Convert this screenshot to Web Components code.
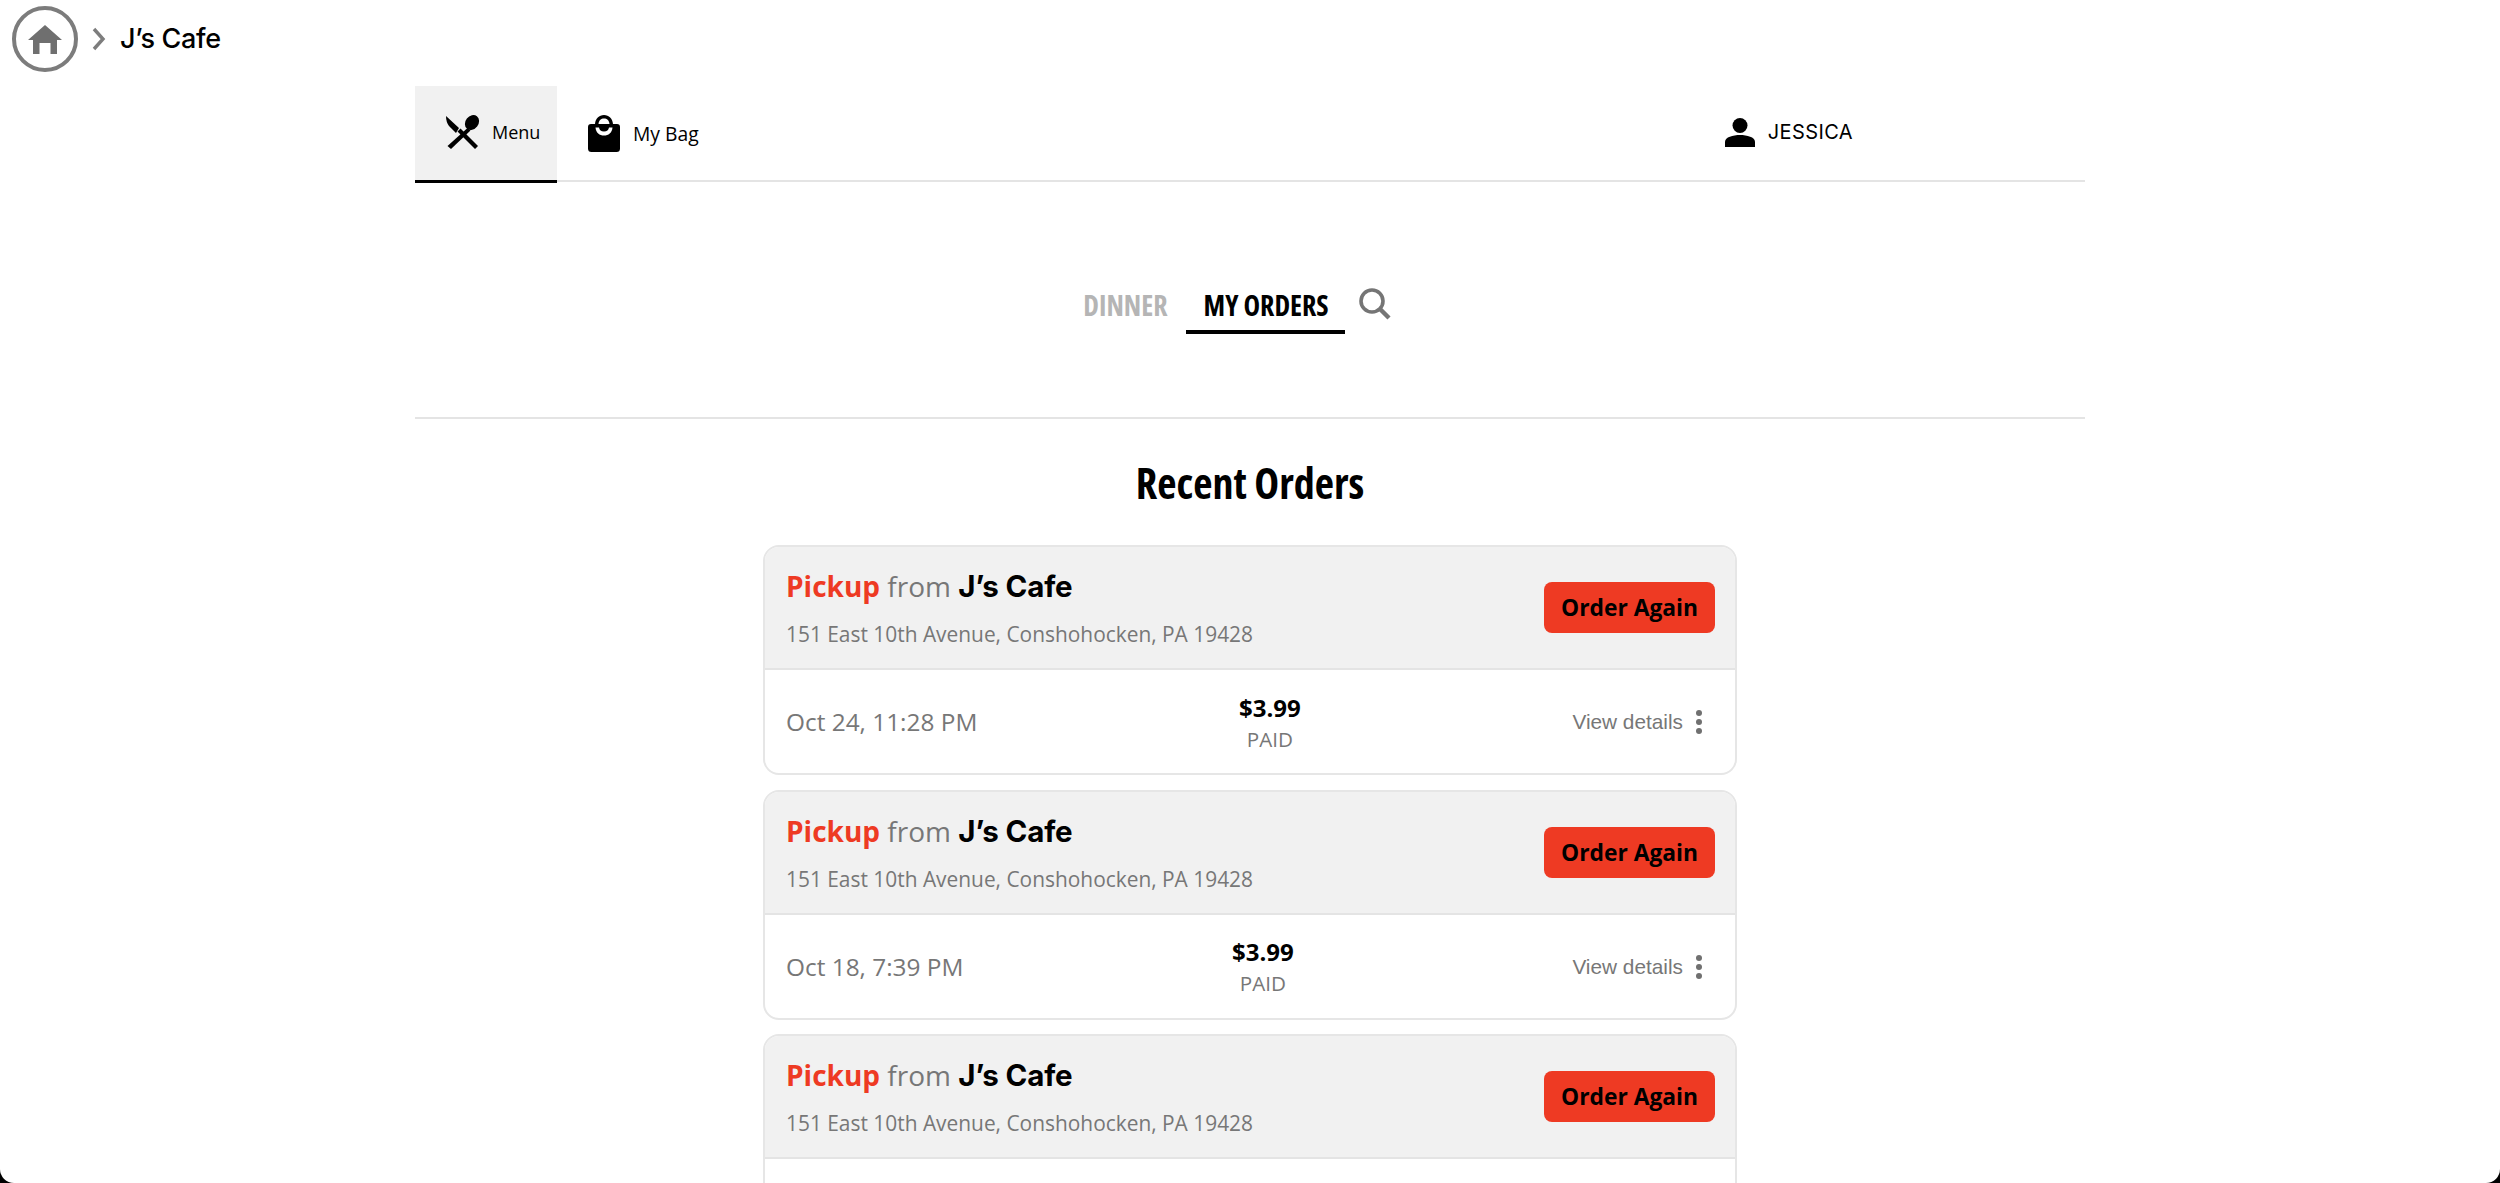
<!DOCTYPE html>
<html>
<head>
<meta charset="utf-8">
<title>J's Cafe</title>
<style>
  html, body { margin: 0; height: 100%; background: #000; overflow: hidden; }
  body { font-family: "Open Sans", sans-serif; }
</style>
</head>
<body>
<cafe-app>
  <cafe-crumbs slot="crumbs">J’s Cafe</cafe-crumbs>
  <cafe-nav slot="nav"></cafe-nav>
  <cafe-tabs slot="tabs"></cafe-tabs>
  <order-card date="Oct 24, 11:28 PM"></order-card>
  <order-card date="Oct 18, 7:39 PM"></order-card>
  <order-card></order-card>
</cafe-app>

<script>
const cafe_app = document.createElement('template');
cafe_app.innerHTML = `
  <style>
    :host { display: block; height: 1183px; background: #fff; border-radius: 0 0 14px 14px; overflow: hidden; }
    .wrap { width: 1670px; margin: 0 auto; }
    h1 {
      font: 700 42px/60px "Open Sans", sans-serif; color: #000; margin: 0; text-align: center;
      font-stretch: 75%; padding-top: 34px; height: 126px; box-sizing: border-box;
    }
    .list { width: 974px; margin: 0 auto; display: flex; flex-direction: column; gap: 14.5px; }
  </style>
  <slot name="crumbs"></slot>
  <div class="wrap">
    <slot name="nav"></slot>
    <slot name="tabs"></slot>
    <h1>Recent Orders</h1>
    <div class="list"><slot></slot></div>
  </div>
`;
class CafeApp extends HTMLElement {
  constructor() {
    super();
    this.attachShadow({ mode: 'open' });
    this.shadowRoot.appendChild(cafe_app.content.cloneNode(true));
  }
}
customElements.define('cafe-app', CafeApp);

const cafe_crumbs = document.createElement('template');
cafe_crumbs.innerHTML = `
  <style>
    :host { display: flex; height: 86px; padding: 6px 0 0 12px; box-sizing: border-box; align-items: flex-start; }
    .home { width: 66px; height: 66px; box-sizing: border-box; border: 4px solid #7c7c7c; border-radius: 50%; display: flex; align-items: center; justify-content: center; }
    .sep { margin: 20px 0 0 14px; }
    .name { margin: 8px 0 0 14px; font: 500 27px/50px Inter, sans-serif; color: #000; letter-spacing: -0.3px; }
  </style>
  <div class="home">
    <svg width="36" height="31" viewBox="0 0 36 31"><path fill="#6f6f6f" d="M18 1 L35 16 H30 V30 H23.5 V19 H12.5 V30 H6 V16 H1 Z"/></svg>
  </div>
  <svg class="sep" width="14" height="26" viewBox="0 0 14 26"><path fill="none" stroke="#7d7d7d" stroke-width="3.4" d="M2 3 L11 13 L2 23"/></svg>
  <div class="name"><slot></slot></div>
`;
class CafeCrumbs extends HTMLElement {
  constructor() {
    super();
    this.attachShadow({ mode: 'open' });
    this.shadowRoot.appendChild(cafe_crumbs.content.cloneNode(true));
  }
}
customElements.define('cafe-crumbs', CafeCrumbs);

const cafe_nav = document.createElement('template');
cafe_nav.innerHTML = `
  <style>
    :host { display: flex; height: 94px; border-bottom: 2px solid #e4e4e4; }
    .item { display: flex; align-items: center; font: 400 18px "Open Sans", sans-serif; color: #000; }
    .menu { width: 142px; height: 97px; box-sizing: border-box; background: #f1f1f1; border-bottom: 3px solid #000; padding: 0 0 3px 30px; gap: 12px; }
    .bag { margin-left: 31px; gap: 13px; height: 94px; box-sizing: border-box; font-size: 19.3px; }
    .user { margin-left: auto; margin-right: 232px; gap: 13px; font: 400 20px Inter, sans-serif; letter-spacing: 0.4px; height: 92px; }
  </style>
  <div class="item menu">
    <svg width="35" height="34" viewBox="0 0 35 34">
      <path d="M1 1 L14 13 L11 18 L4 11 Q1 7 1 1 Z M12.5 16.5 L15.5 13.5 L33 31 L30 34 Z"/>
      <ellipse cx="27" cy="7.5" rx="6.5" ry="8" transform="rotate(38 27 7.5)"/>
      <path d="M22.5 13 L25.5 15.5 L6 34 L2.5 31 Z"/>
    </svg>
    <span>Menu</span>
  </div>
  <div class="item bag">
    <svg width="32" height="37" viewBox="0 0 32 37">
      <path fill-rule="evenodd" d="M16 0 C21 0 24.5 3.5 25 9 H29 Q32 9 32 12 V33.5 Q32 37 28.5 37 H3.5 Q0 37 0 33.5 V12 Q0 9 3 9 H7 C7.5 3.5 11 0 16 0 Z M10.5 9 H21.5 C21 5 19 3.5 16 3.5 C13 3.5 11 5 10.5 9 Z M7.5 12.5 C8 18 11.5 20.5 16 20.5 C20.5 20.5 24 18 24.5 12.5 H21 C20.5 15 19 16.5 16 16.5 C13 16.5 11.5 15 11 12.5 Z"/>
    </svg>
    <span>My Bag</span>
  </div>
  <div class="item user">
    <svg width="30" height="29" viewBox="0 0 30 29">
      <ellipse cx="15" cy="7.5" rx="7.5" ry="7.5"/>
      <path d="M0 29 V24 C0 19 8 17 15 17 C22 17 30 19 30 24 V29 Z"/>
    </svg>
    <span>JESSICA</span>
  </div>
`;
class CafeNav extends HTMLElement {
  constructor() {
    super();
    this.attachShadow({ mode: 'open' });
    this.shadowRoot.appendChild(cafe_nav.content.cloneNode(true));
  }
}
customElements.define('cafe-nav', CafeNav);

const cafe_tabs = document.createElement('template');
cafe_tabs.innerHTML = `
  <style>
    :host { display: flex; justify-content: center; align-items: flex-start; height: 237px; box-sizing: border-box; border-bottom: 2px solid #e4e4e4; padding: 99px 44px 0 0; font: 700 28px/48px "Open Sans", sans-serif; font-stretch: 75%; }
    .tab { padding: 0 18px; height: 53px; box-sizing: border-box; }
    .off { color: #b5b5b5; }
    .on { color: #000; border-bottom: 4px solid #000; margin-right: 14px; padding: 0 16px 0 18px; }
    svg { margin-top: 7px; }
  </style>
  <div class="tab off">DINNER</div>
  <div class="tab on">MY ORDERS</div>
  <svg width="32" height="32" viewBox="0 0 32 32"><circle cx="13" cy="13" r="11" fill="none" stroke="#757575" stroke-width="3.6"/><path d="M21 21 L30 30" stroke="#757575" stroke-width="4.4" fill="none"/></svg>
`;
class CafeTabs extends HTMLElement {
  constructor() {
    super();
    this.attachShadow({ mode: 'open' });
    this.shadowRoot.appendChild(cafe_tabs.content.cloneNode(true));
  }
}
customElements.define('cafe-tabs', CafeTabs);

const order_card = document.createElement('template');
order_card.innerHTML = `
  <style>
    :host { display: block; height: 230px; box-sizing: border-box; border: 2px solid #e6e6e6; border-radius: 16px; overflow: hidden; background: #fff; }
    .head { height: 123px; box-sizing: border-box; background: #f1f1f1; border-bottom: 2px solid #e4e4e4; display: flex; justify-content: space-between; padding: 0 20px 0 21px; }
    .title { font: 400 28px/38px "Open Sans", sans-serif; color: #777; margin-top: 20px; white-space: nowrap; }
    .title b { color: #ee3a23; font-weight: 700; }
    .title strong { color: #000; font: 700 29.5px Inter, sans-serif; letter-spacing: -0.15px; }
    .addr { font: 400 20.9px/28px "Open Sans", sans-serif; color: #777; margin-top: 15px; }
    button { width: 171px; height: 51px; margin-top: 35px; border: 0; border-radius: 8px; background: #ee3a23; color: #000; font: 700 22.8px "Open Sans", sans-serif; padding: 0; }
    .body { height: 103px; display: flex; justify-content: space-between; align-items: center; padding: 0 33px 0 21px; box-sizing: border-box; }
    .date { font: 400 24.4px "Open Sans", sans-serif; color: #777; white-space: nowrap; }
    .price { text-align: center; margin-right: 10px; padding-top: 1px; }
    .price b { display: block; font: 700 24px/31px "Open Sans", sans-serif; color: #000; }
    .price span { display: block; font: 400 20.6px/28px "Open Sans", sans-serif; color: #777; margin-top: 2px; }
    .more { display: flex; align-items: center; gap: 13px; font: 400 20.8px "Liberation Sans", sans-serif; color: #777; padding-top: 1px; }
    .dots { display: flex; flex-direction: column; gap: 3px; }
    .dots i { width: 6px; height: 6px; border-radius: 50%; background: #707070; }
  </style>
  <div class="head">
    <div>
      <div class="title"><b>Pickup</b> from <strong>J’s Cafe</strong></div>
      <div class="addr">151 East 10th Avenue, Conshohocken, PA 19428</div>
    </div>
    <button>Order Again</button>
  </div>
  <div class="body"></div>
`;
class OrderCard extends HTMLElement {
  constructor() {
    super();
    this.attachShadow({ mode: 'open' });
    this.shadowRoot.appendChild(order_card.content.cloneNode(true));
  }
  connectedCallback() {
    // the last card runs off the window, it has no visible row
    let date = this.getAttribute('date');
    if (!date) return;
    this.shadowRoot.querySelector('.body').innerHTML = `
      <div class="date">${date}</div>
      <div class="price"><b>$3.99</b><span>PAID</span></div>
      <div class="more">View details <div class="dots"><i></i><i></i><i></i></div></div>
    `;
  }
}
customElements.define('order-card', OrderCard);
</script>
</body>
</html>
